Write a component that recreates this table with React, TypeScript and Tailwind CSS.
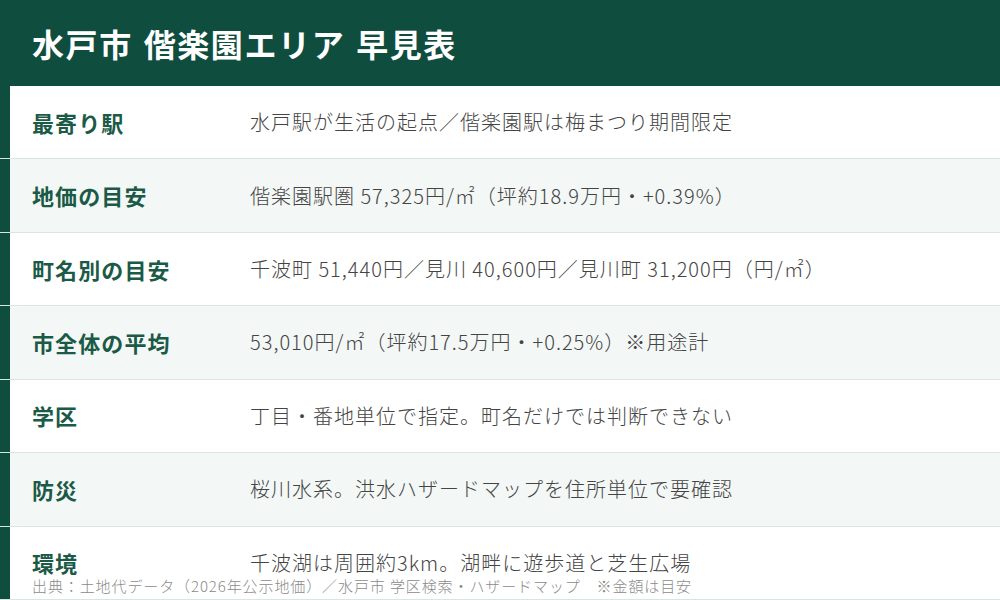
import React from "react";

const rows: { label: string; value: string }[] = [
  { label: "最寄り駅", value: "水戸駅が生活の起点／偕楽園駅は梅まつり期間限定" },
  { label: "地価の目安", value: "偕楽園駅圏 57,325円/㎡（坪約18.9万円・+0.39%）" },
  { label: "町名別の目安", value: "千波町 51,440円／見川 40,600円／見川町 31,200円（円/㎡）" },
  { label: "市全体の平均", value: "53,010円/㎡（坪約17.5万円・+0.25%）※用途計" },
  { label: "学区", value: "丁目・番地単位で指定。町名だけでは判断できない" },
  { label: "防災", value: "桜川水系。洪水ハザードマップを住所単位で要確認" },
  { label: "環境", value: "千波湖は周囲約3km。湖畔に遊歩道と芝生広場" },
];

export default function App() {
  return (
    <div
      className="relative flex h-[600px] w-[1000px] flex-col overflow-hidden bg-white"
      style={{ fontFamily: '"Noto Sans CJK JP", "Noto Sans", sans-serif' }}
    >
      <header className="flex h-[86px] shrink-0 items-center bg-[#0f4d3f] pl-[32px]">
        <h1 className="text-[32px] font-bold leading-none tracking-[0.05em] text-white [word-spacing:2px]">
          水戸市 偕楽園エリア 早見表
        </h1>
      </header>
      <div className="flex flex-1 flex-col">
        {rows.map((r, i) => (
          <div
            key={r.label}
            className={`flex flex-1 items-stretch border-b border-[#d9e5e1] ${
              i % 2 === 1 ? "bg-[#f3f7f6]" : "bg-white"
            }`}
          >
            <div className="w-[10px] shrink-0 bg-[#0f4d3f]" />
            <div className="flex w-[240px] shrink-0 items-center pl-[22px] text-[22px] font-bold tracking-[0.05em] text-[#1b5a47]">
              {r.label}
            </div>
            <div className="flex items-center text-[20px] font-light tracking-[0.05em] text-[#444444]">
              {r.value}
            </div>
          </div>
        ))}
      </div>
      <div className="absolute bottom-[4px] left-[32px] text-[15px] font-light leading-[20px] tracking-[0.06em] text-[#8a8a8a]">
        出典：土地代データ（2026年公示地価）／水戸市 学区検索・ハザードマップ　※金額は目安
      </div>
    </div>
  );
}
